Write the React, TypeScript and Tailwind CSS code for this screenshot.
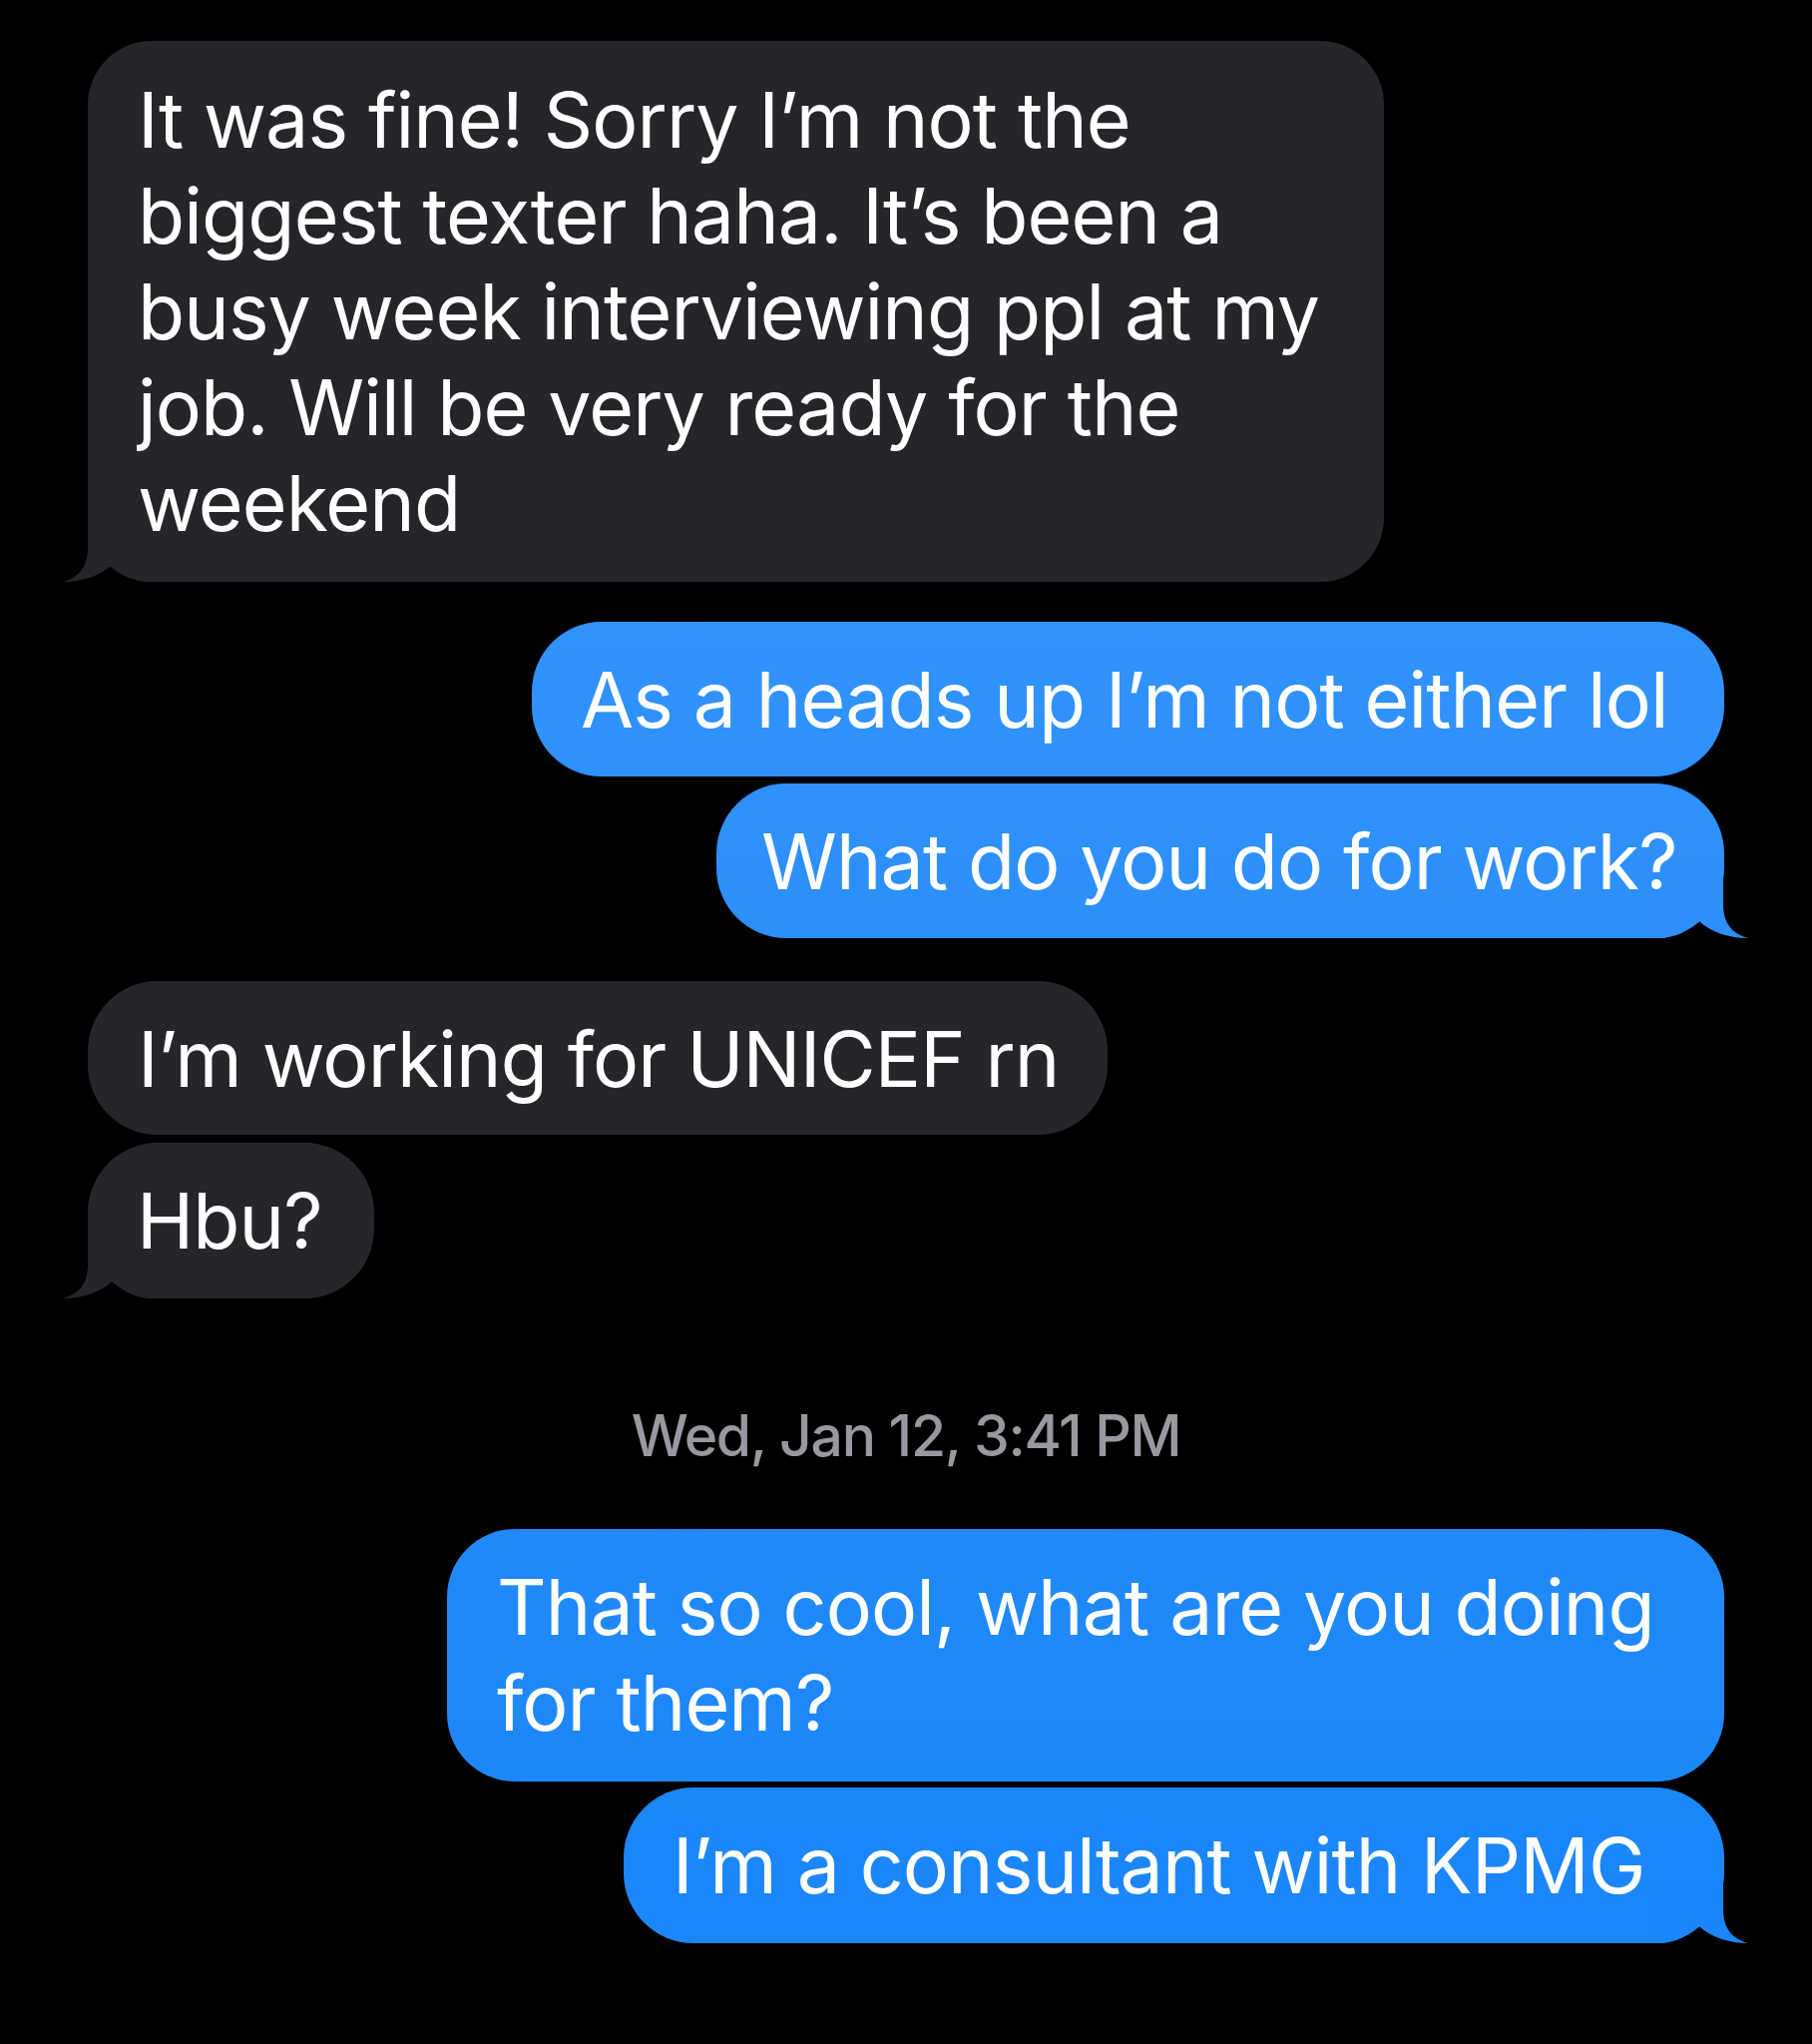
import React from "react";

const GRAY = "#26252a";

function TailLeft({ color }: { color: string }) {
  return (
    <svg
      className="absolute bottom-0 left-[-25px] h-[64px] w-[100px]"
      viewBox="0 0 100 64"
      aria-hidden="true"
    >
      <path
        d="M25 0 L25 30 C25 50 15 60 0 64 C18 64 38 58 49 47 C60 56 72 64 90 64 L100 64 L100 0 Z"
        fill={color}
      />
    </svg>
  );
}

function TailRight({ color }: { color: string }) {
  return (
    <svg
      className="absolute bottom-0 right-[-24px] h-[64px] w-[100px] -scale-x-100"
      viewBox="0 0 100 64"
      aria-hidden="true"
    >
      <path
        d="M25 0 L25 30 C25 50 15 60 0 64 C18 64 38 58 49 47 C60 56 72 64 90 64 L100 64 L100 0 Z"
        fill={color}
      />
    </svg>
  );
}

export default function App() {
  const text =
    "text-[77px] leading-[96px] text-white whitespace-nowrap font-['Inter','Noto_Sans',sans-serif] tracking-[-0.9px]";
  const blue = "bg-[linear-gradient(to_bottom,#3c98fd,#1885f9)] bg-fixed";
  return (
    <div className="min-h-[2048px] w-[1816px] bg-black">
      <div className="flex flex-col pt-[41px]">
        {/* Gray bubble 1 */}
        <div className={`relative ml-[88px] w-[1299px] rounded-[64px] bg-[#26252a] pl-[50px] pt-[31px] pb-[31px] ${text}`}>
          <TailLeft color={GRAY} />
          <span className="relative">
            It was fine! Sorry I’m not the
            <br />
            biggest texter haha. It’s been a
            <br />
            busy week interviewing ppl at my
            <br />
            job. Will be very ready for the
            <br />
            weekend
          </span>
        </div>

        {/* Blue 1 */}
        <div className={`relative mt-[40px] mr-[88px] self-end w-[1195px] rounded-[70px] ${blue} pl-[49px] pt-[30px] pb-[29px] ${text}`}>
          <span className="relative">As a heads up I’m not either lol</span>
        </div>

        {/* Blue 2 */}
        <div className={`relative mt-[7px] mr-[88px] self-end w-[1010px] rounded-[70px] ${blue} pl-[45px] pt-[30px] pb-[29px] ${text}`}>
          <TailRight color="#2c8ffb" />
          <span className="relative">What do you do for work?</span>
        </div>

        {/* Gray UNICEF */}
        <div className={`relative mt-[43px] ml-[88px] w-[1022px] rounded-[70px] bg-[#26252a] pl-[50px] pt-[30px] pb-[28px] ${text}`}>
          <span className="relative">I’m working for UNICEF rn</span>
        </div>

        {/* Hbu */}
        <div className={`relative mt-[8px] ml-[88px] w-[287px] rounded-[70px] bg-[#26252a] pl-[49px] pt-[30px] pb-[30px] ${text}`}>
          <TailLeft color={GRAY} />
          <span className="relative">Hbu?</span>
        </div>

        {/* Timestamp */}
        <div className="mt-[110px] flex justify-center">
          <span className="text-[57px] leading-[56px] font-medium tracking-[-1.3px] text-[#98989e] whitespace-nowrap font-['Inter','Noto_Sans',sans-serif]">
            Wed, Jan 12, 3:41 PM
          </span>
        </div>

        {/* That so cool */}
        <div className={`relative mt-[65px] mr-[88px] self-end w-[1280px] rounded-[68px] ${blue} pl-[50px] pt-[30px] pb-[31px] ${text}`}>
          <span className="relative">
            That so cool, what are you doing
            <br />
            for them?
          </span>
        </div>

        {/* KPMG */}
        <div className={`relative mt-[6px] mr-[88px] self-end w-[1103px] rounded-[70px] ${blue} pl-[49px] pt-[30px] pb-[30px] ${text}`}>
          <TailRight color="#1a86f9" />
          <span className="relative">I’m a consultant with KPMG</span>
        </div>
      </div>
    </div>
  );
}
